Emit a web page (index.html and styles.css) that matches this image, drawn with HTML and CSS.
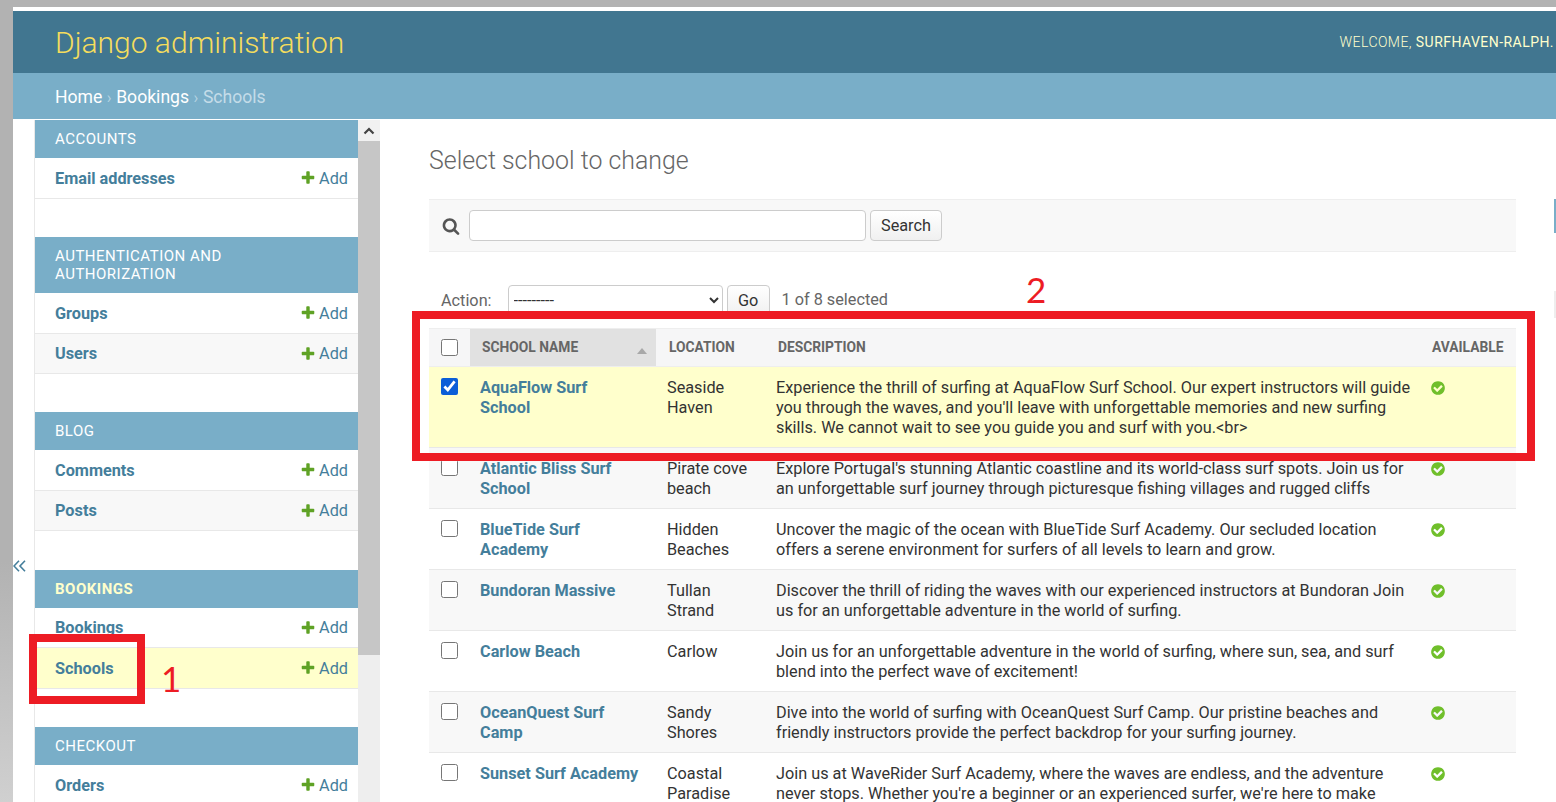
FILE: index.html
```html
<!DOCTYPE html>
<html lang="en">

<head>
    <meta charset="UTF-8">
    <meta name="viewport" content="width=device-width, initial-scale=1.0">
    <title>Select school to change | Django site admin</title>
    <link rel="stylesheet" href="styles.css">
</head>

<body>
    <svg class="icon-defs" aria-hidden="true">
        <symbol id="icon-add" viewBox="0 0 1792 1792">
            <path d="M1600 736v192q0 40-28 68t-68 28h-416v416q0 40-28 68t-68 28h-192q-40 0-68-28t-28-68v-416h-416q-40 0-68-28t-28-68v-192q0-40 28-68t68-28h416v-416q0-40 28-68t68-28h192q40 0 68 28t28 68v416h416q40 0 68 28t28 68z"/>
        </symbol>
        <symbol id="icon-yes" viewBox="0 0 1792 1792">
            <path d="M1412 734q0-28-18-46l-91-90q-19-19-45-19t-45 19l-408 407-226-226q-19-19-45-19t-45 19l-91 90q-18 18-18 46 0 27 18 45l362 362q19 19 45 19 27 0 46-19l543-543q18-18 18-45zm252 162q0 209-103 385.5t-279.5 279.5-385.5 103-385.5-103-279.5-279.5-103-385.5 103-385.5 279.5-279.5 385.5-103 385.5 103 279.5 279.5 103 385.5z"/>
        </symbol>
    </svg>

    <div class="window">
        <header class="site-header">
            <a class="branding" href="#">Django administration</a>
            <div class="user-tools">WELCOME, <strong>SURFHAVEN-RALPH.</strong></div>
        </header>

        <nav class="breadcrumbs">
            <a href="#">Home</a><span class="crumb-sep">›</span><a href="#">Bookings</a><span class="crumb-sep">›</span><span class="crumb-current">Schools</span>
        </nav>

        <div class="main">
            <div class="nav-toggle">
                <svg width="13" height="12" viewBox="0 0 13 12"><path d="M6 .8 1 6l5 5.200M12 .8 7 6l5 5.200" fill="none" stroke="#447e9b" stroke-width="1.600"/></svg>
            </div>

            <aside class="nav-sidebar">
                <section class="module">
                    <h2 class="caption">Accounts</h2>
                    <div class="nav-row"><a class="model" href="#">Email addresses</a><a class="addlink" href="#"><svg class="add-icon"><use href="#icon-add"/></svg>Add</a></div>
                </section>
                <section class="module module-auth">
                    <h2 class="caption">Authentication and Authorization</h2>
                    <div class="nav-row"><a class="model" href="#">Groups</a><a class="addlink" href="#"><svg class="add-icon"><use href="#icon-add"/></svg>Add</a></div>
                    <div class="nav-row alt"><a class="model" href="#">Users</a><a class="addlink" href="#"><svg class="add-icon"><use href="#icon-add"/></svg>Add</a></div>
                </section>
                <section class="module">
                    <h2 class="caption">Blog</h2>
                    <div class="nav-row"><a class="model" href="#">Comments</a><a class="addlink" href="#"><svg class="add-icon"><use href="#icon-add"/></svg>Add</a></div>
                    <div class="nav-row alt"><a class="model" href="#">Posts</a><a class="addlink" href="#"><svg class="add-icon"><use href="#icon-add"/></svg>Add</a></div>
                </section>
                <section class="module">
                    <h2 class="caption current-app">Bookings</h2>
                    <div class="nav-row"><a class="model" href="#">Bookings</a><a class="addlink" href="#"><svg class="add-icon"><use href="#icon-add"/></svg>Add</a></div>
                    <div class="nav-row current-model"><a class="model" href="#">Schools</a><a class="addlink" href="#"><svg class="add-icon"><use href="#icon-add"/></svg>Add</a></div>
                </section>
                <section class="module">
                    <h2 class="caption">Checkout</h2>
                    <div class="nav-row"><a class="model" href="#">Orders</a><a class="addlink" href="#"><svg class="add-icon"><use href="#icon-add"/></svg>Add</a></div>
                </section>
            </aside>

            <div class="scrollbar">
                <div class="scroll-up">
                    <svg width="12" height="8" viewBox="0 0 12 8"><path d="M1.5 6.5 6 2l4.500 4.500" fill="none" stroke="#444" stroke-width="2.200"/></svg>
                </div>
                <div class="scroll-thumb"></div>
            </div>

            <div class="content">
                <h1 class="page-title">Select school to change</h1>

                <div class="toolbar">
                    <svg class="search-icon" viewBox="0 0 1792 1792"><path d="M1216 832q0-185-131.500-316.500t-316.500-131.500-316.500 131.500-131.500 316.500 131.500 316.500 316.500 131.500 316.500-131.500 131.500-316.500zm512 832q0 52-38 90t-90 38q-54 0-90-38l-343-342q-179 124-399 124-143 0-273.500-55.500t-225-150-150-225-55.500-273.500 55.500-273.500 150-225 225-150 273.500-55.500 273.500 55.500 225 150 150 225 55.500 273.500q0 220-124 399l343 343q37 37 37 90z"/></svg>
                    <input class="search-input" type="text">
                    <button class="btn search-btn" type="button">Search</button>
                </div>

                <div class="actions">
                    <label class="action-label">Action:</label>
                    <select class="action-select"><option>---------</option></select>
                    <button class="btn go-btn" type="button">Go</button>
                    <span class="action-counter">1 of 8 selected</span>
                </div>

                <table class="result-list">
                    <colgroup>
                        <col class="col-check">
                        <col class="col-name">
                        <col class="col-location">
                        <col class="col-desc">
                        <col class="col-available">
                    </colgroup>
                    <thead>
                        <tr>
                            <th class="check-cell"><input type="checkbox"></th>
                            <th class="sorted">School name<span class="sort-arrow"></span></th>
                            <th>Location</th>
                            <th>Description</th>
                            <th>Available</th>
                        </tr>
                    </thead>
                    <tbody>
                        <tr class="selected">
                            <td class="check-cell"><input type="checkbox" checked></td>
                            <td class="name-cell"><a href="#">AquaFlow Surf School</a></td>
                            <td class="location-cell">Seaside Haven</td>
                            <td class="desc-cell">Experience the thrill of surfing at AquaFlow Surf School. Our expert instructors will guide you through the waves, and you'll leave with unforgettable memories and new surfing skills. We cannot wait to see you guide you and surf with you.&lt;br&gt;</td>
                            <td><svg class="yes-icon"><use href="#icon-yes"/></svg></td>
                        </tr>
                        <tr class="alt">
                            <td class="check-cell"><input type="checkbox"></td>
                            <td class="name-cell"><a href="#">Atlantic Bliss Surf School</a></td>
                            <td class="location-cell">Pirate cove beach</td>
                            <td class="desc-cell">Explore Portugal's stunning Atlantic coastline and its world-class surf spots. Join us for an unforgettable surf journey through picturesque fishing villages and rugged cliffs</td>
                            <td><svg class="yes-icon"><use href="#icon-yes"/></svg></td>
                        </tr>
                        <tr>
                            <td class="check-cell"><input type="checkbox"></td>
                            <td class="name-cell"><a href="#">BlueTide Surf Academy</a></td>
                            <td class="location-cell">Hidden Beaches</td>
                            <td class="desc-cell">Uncover the magic of the ocean with BlueTide Surf Academy. Our secluded location offers a serene environment for surfers of all levels to learn and grow.</td>
                            <td><svg class="yes-icon"><use href="#icon-yes"/></svg></td>
                        </tr>
                        <tr class="alt">
                            <td class="check-cell"><input type="checkbox"></td>
                            <td class="name-cell"><a href="#">Bundoran Massive</a></td>
                            <td class="location-cell">Tullan Strand</td>
                            <td class="desc-cell">Discover the thrill of riding the waves with our experienced instructors at Bundoran Join us for an unforgettable adventure in the world of surfing.</td>
                            <td><svg class="yes-icon"><use href="#icon-yes"/></svg></td>
                        </tr>
                        <tr>
                            <td class="check-cell"><input type="checkbox"></td>
                            <td class="name-cell"><a href="#">Carlow Beach</a></td>
                            <td class="location-cell">Carlow</td>
                            <td class="desc-cell">Join us for an unforgettable adventure in the world of surfing, where sun, sea, and surf blend into the perfect wave of excitement!</td>
                            <td><svg class="yes-icon"><use href="#icon-yes"/></svg></td>
                        </tr>
                        <tr class="alt">
                            <td class="check-cell"><input type="checkbox"></td>
                            <td class="name-cell"><a href="#">OceanQuest Surf Camp</a></td>
                            <td class="location-cell">Sandy Shores</td>
                            <td class="desc-cell">Dive into the world of surfing with OceanQuest Surf Camp. Our pristine beaches and friendly instructors provide the perfect backdrop for your surfing journey.</td>
                            <td><svg class="yes-icon"><use href="#icon-yes"/></svg></td>
                        </tr>
                        <tr>
                            <td class="check-cell"><input type="checkbox"></td>
                            <td class="name-cell"><a href="#">Sunset Surf Academy</a></td>
                            <td class="location-cell">Coastal Paradise</td>
                            <td class="desc-cell">Join us at WaveRider Surf Academy, where the waves are endless, and the adventure never stops. Whether you're a beginner or an experienced surfer, we're here to make</td>
                            <td><svg class="yes-icon"><use href="#icon-yes"/></svg></td>
                        </tr>
                    </tbody>
                </table>
            </div>

            <div class="filter-edge">
                <div class="filter-top"></div>
                <div class="filter-item"></div>
            </div>
        </div>
    </div>

    <!-- annotations drawn over the screenshot -->
    <div class="mark mark-schools"></div>
    <div class="mark mark-table"></div>
    <span class="mark-num num-one">1</span>
    <span class="mark-num num-two">2</span>
</body>

</html>
```

FILE: styles.css
```css
* {
    box-sizing: border-box;
}

html,
body {
    height: 100%;
}

body {
    margin: 0;
    height: 802px;
    padding: 7px 0 0 13px;
    overflow: hidden;
    position: relative;
    background: linear-gradient(to bottom, #b2b2b2 0%, #b2b2b2 70%, #d0d0d0 100%);
    font-family: 'Roboto', 'Liberation Sans', sans-serif;
    font-size: 16.25px;
    color: #333;
}

a {
    text-decoration: none;
    color: #447e9b;
}

.icon-defs {
    position: absolute;
    width: 0;
    height: 0;
}

.window {
    height: 795px;
    padding-top: 4px;
    background-color: #fff;
    display: flex;
    flex-direction: column;
    overflow: hidden;
}

/* header */
.site-header {
    flex: none;
    height: 62px;
    padding: 0 2px 0 42px;
    background-color: #417690;
    display: flex;
    align-items: center;
    justify-content: space-between;
}

.branding {
    font-size: 30px;
    font-weight: 300;
    color: #f5dd5d;
}

.user-tools {
    font-size: 14px;
    font-weight: 300;
    letter-spacing: 0.45px;
    color: #ffc;
    white-space: nowrap;
}

.user-tools strong {
    font-weight: 400;
}

.breadcrumbs {
    flex: none;
    height: 46px;
    margin-bottom: 1px;
    padding: 2px 0 0 42px;
    background-color: #79aec8;
    display: flex;
    align-items: center;
    font-size: 17.6px;
    color: #c4dce8;
}

.breadcrumbs a {
    color: #fff;
}

.crumb-sep {
    margin: 0 4.5px;
    font-size: 16px;
    color: #b5d3e2;
}

.crumb-current {
    color: #c4dce8;
}

/* layout */
.main {
    flex: 1;
    min-height: 0;
    display: flex;
    overflow: hidden;
}

.nav-toggle {
    flex: none;
    width: 22px;
    border-right: 1px solid #e8e8e8;
    display: flex;
    align-items: center;
    padding-top: 209px;
}

/* sidebar */
.nav-sidebar {
    flex: none;
    width: 323px;
}

.module {
    margin-bottom: 38.5px;
}

.module-auth {
    margin-bottom: 38px;
}

.caption {
    margin: 0;
    padding: 10px 20px;
    background-color: #79aec8;
    font-size: 15px;
    font-weight: 400;
    line-height: 18px;
    letter-spacing: 0.5px;
    text-transform: uppercase;
    color: #fff;
}

.caption.current-app {
    font-weight: 700;
    color: #ffc;
}

.nav-row {
    padding: 10.5px 10px 9.5px 20px;
    border-bottom: 1px solid #e8e8e8;
    display: flex;
    justify-content: space-between;
    line-height: 19.5px;
}

.nav-row.alt {
    background-color: #f8f8f8;
}

.nav-row.current-model {
    background-color: #ffc;
}

.model {
    font-weight: 700;
}

.addlink {
    display: flex;
    align-items: center;
}

.add-icon {
    width: 16px;
    height: 16px;
    margin-right: 3px;
    fill: #5fa225;
}

/* fake browser scrollbar of the sidebar */
.scrollbar {
    flex: none;
    width: 22px;
    background-color: #eee;
    display: flex;
    flex-direction: column;
}

.scroll-up {
    height: 21px;
    background-color: #f1f1f1;
    display: flex;
    align-items: center;
    justify-content: center;
}

.scroll-thumb {
    height: 514px;
    background-color: #c6c6c6;
}

/* content */
.content {
    flex: none;
    width: 1136px;
    padding-left: 49px;
}

.page-title {
    margin: 26px 0 23px;
    font-size: 24.9px;
    font-weight: 300;
    line-height: 30px;
    color: #666;
}

.toolbar {
    height: 53px;
    padding: 0 0 0 13px;
    background-color: #f8f8f8;
    border-top: 1px solid #eee;
    border-bottom: 1px solid #eee;
    display: flex;
    align-items: center;
}

.search-icon {
    width: 18px;
    height: 18px;
    margin-right: 9px;
    fill: #555;
}

.search-input {
    width: 397px;
    height: 31px;
    margin-right: 4px;
    background-color: #fff;
    border: 1px solid #ccc;
    border-radius: 4px;
}

.btn {
    height: 31px;
    padding: 0 10px;
    background: linear-gradient(to bottom, #fff, #f0f0f0);
    border: 1px solid #ccc;
    border-radius: 4px;
    font-family: inherit;
    font-size: 16.25px;
    color: #333;
}

.actions {
    height: 43px;
    margin-top: 33px;
    padding-left: 12px;
    display: flex;
    align-items: flex-start;
    color: #666;
}

.action-label {
    line-height: 31px;
    margin-right: 16px;
}

.action-select {
    width: 215px;
    height: 31px;
    margin-right: 4px;
    padding-left: 1px;
    background-color: #fff;
    border: 1px solid #ccc;
    border-radius: 4px;
    font-family: inherit;
    font-size: 16.25px;
    color: #333;
}

.go-btn {
    width: 43px;
    padding: 0;
}

.action-counter {
    margin-left: 12px;
    line-height: 29px;
}

/* results table */
.result-list {
    width: 1087px;
    table-layout: fixed;
    border-collapse: collapse;
}

.col-check {
    width: 41px;
}

.col-name {
    width: 186px;
}

.col-location {
    width: 110px;
}

.col-desc {
    width: 654px;
}

.col-available {
    width: 96px;
}

.result-list th {
    height: 38px;
    padding: 0 12px 1px;
    background-color: #f6f6f7;
    border-top: 1px solid #eee;
    border-bottom: 1px solid #eee;
    font-size: 13.8px;
    font-weight: 700;
    text-align: left;
    text-transform: uppercase;
    color: #666;
    white-space: nowrap;
}

.result-list th:nth-child(3) {
    padding-left: 13px;
}

.result-list th.sorted {
    position: relative;
    background-color: #e1e1e1;
}

.sort-arrow {
    position: absolute;
    right: 9px;
    top: 19px;
    border-left: 5.5px solid transparent;
    border-right: 5.5px solid transparent;
    border-bottom: 6px solid #a8a8a8;
}

.result-list td {
    padding: 11px 10px 9px;
    border-bottom: 1px solid #e8e8e8;
    line-height: 20px;
    vertical-align: top;
}

.result-list td a {
    font-weight: 700;
}

.result-list td.name-cell {
    padding-right: 16px;
}

.result-list td.location-cell {
    padding-left: 11px;
}

.result-list td.desc-cell {
    padding-right: 9px;
}

.result-list tr.alt td {
    background-color: #f8f8f8;
}

.result-list tr.selected td {
    background-color: #ffc;
}

.result-list .check-cell {
    padding: 0 0 0 12px;
}

.result-list td.check-cell {
    padding-top: 11px;
}

.check-cell input {
    display: block;
    width: 17px;
    height: 17px;
    margin: 0;
    accent-color: #0b5ed7;
}

.yes-icon {
    display: block;
    width: 16px;
    height: 16px;
    margin-top: 2px;
    fill: #70bf2b;
}

/* edge of the filter panel */
.filter-edge {
    flex: none;
    width: 2px;
    margin-left: 38px;
    padding-top: 79px;
}

.filter-top {
    height: 34px;
    background-color: #79aec8;
}

.filter-item {
    height: 27px;
    margin-top: 58px;
    background-color: #eee;
}

/* red annotations */
.mark {
    position: absolute;
    border: 8px solid #ed1c24;
}

.mark-schools {
    left: 29px;
    top: 634px;
    width: 116px;
    height: 70px;
}

.mark-table {
    left: 412px;
    top: 311px;
    width: 1123px;
    height: 150px;
}

.mark-num {
    position: absolute;
    font-family: 'Lato', sans-serif;
    font-size: 35px;
    line-height: 36px;
    color: #ed1c24;
}

.num-one {
    left: 161px;
    top: 660px;
}

.num-two {
    left: 1026px;
    top: 271px;
}
```
